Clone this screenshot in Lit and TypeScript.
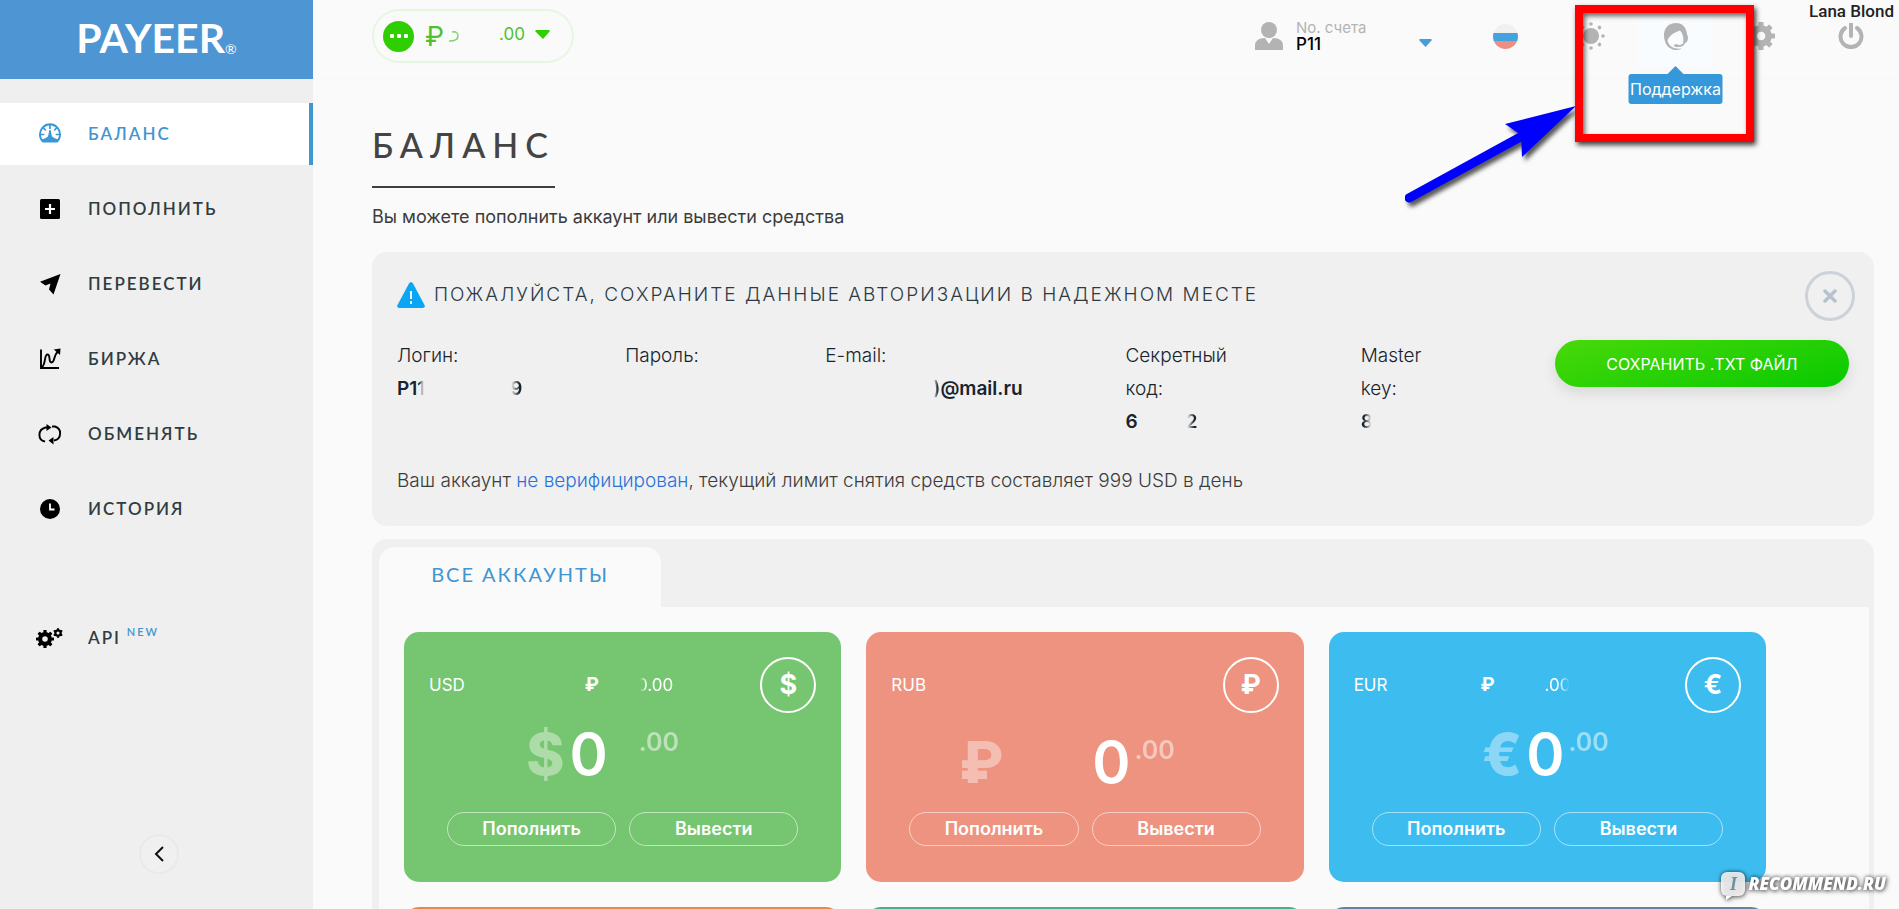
import { LitElement, html, css, svg, nothing } from "lit";
import { customElement, property } from "lit/decorators.js";
import { styleMap } from "lit/directives/style-map.js";

const cog = (cx: number, cy: number, r: number, teeth: number) => {
  const step = 360 / teeth;
  const w = r * 0.36;
  return svg`<g transform="translate(${cx} ${cy})">
    <circle r=${r * 0.54} fill="none" stroke="currentColor" stroke-width=${r * 0.46}></circle>
    ${Array.from({ length: teeth }, (_, i) => svg`<rect x=${-w / 2} y=${-r} width=${w} height=${r * 0.4} rx="0.6"
      fill="currentColor" transform="rotate(${i * step})"></rect>`)}
  </g>`;
};

const icons: Record<string, unknown> = {
  balance: svg`<path fill="currentColor" d="M4.6 20.5a11 11 0 1 1 14.8 0zM12 3.4a9 9 0 0 0-7.6 13.8c1.8-.3 3.6-1 5.6-2.6L11.4 8h1.2l1.4 6.600c2 1.600 3.800 2.300 5.600 2.600A9 9 0 0 0 12 3.400z"></path>
    <path stroke="currentColor" stroke-width="1.700" fill="none" d="M12 3v4M5 5.500l2.800 2.800M19 5.500l-2.800 2.800M2.500 12.500h3.800M21.500 12.500h-3.800"></path>`,
  deposit: svg`<rect x="2" y="2" width="20" height="20" rx="1.500" fill="currentColor"></rect>
    <path d="M12 7v10M7 12h10" stroke="#fff" stroke-width="2.200"></path>`,
  transfer: svg`<path fill="currentColor" d="M22.500 2 15.500 22.500 11 17.500 12.500 11.500 7.500 13.500 2 9.800z"></path>`,
  exchange: svg`<path d="M3 2.500V21h18M4 20C8 17 6 7.500 9.500 7.500S10 15.500 13.500 15.500 15.500 8 20 4.500" fill="none" stroke="currentColor" stroke-width="1.900"></path>
    <path d="M15.800 2.500 22.500 1.500 22 8z" fill="currentColor"></path>`,
  swap: svg`<path d="M9 5.500H7.500C-.5 7.500-.5 18 7 19.500M14 4.500h3c7 2 7 12.500-1 14" fill="none" stroke="currentColor" stroke-width="1.900"></path>
    <path d="M8.500 2 13.500 5.500 8.500 9zM15.500 15 10.500 18.500 15.500 22.500z" fill="currentColor"></path>`,
  history: svg`<circle cx="12" cy="12" r="10" fill="currentColor"></circle>
    <path d="M12 6.500V12.500H16.500" fill="none" stroke="#fff" stroke-width="1.800"></path>`,
};

interface Link { id: string; label: string }
const links: Link[] = [
  { id: "balance", label: "БАЛАНС" },
  { id: "deposit", label: "ПОПОЛНИТЬ" },
  { id: "transfer", label: "ПЕРЕВЕСТИ" },
  { id: "exchange", label: "БИРЖА" },
  { id: "swap", label: "ОБМЕНЯТЬ" },
  { id: "history", label: "ИСТОРИЯ" },
];

interface Account {
  tone: string; code: string; sign: string; low?: boolean;
  lead?: number; gap?: number; total?: string; cut?: string;
  before: number; after: number; tail: number;
}
const accounts: Account[] = [
  { tone: "green", code: "USD", sign: "$", lead: 120, gap: 38, total: "0.00", cut: "cut", before: 5, after: 31, tail: 40 },
  { tone: "coral", code: "RUB", sign: "₽", low: true, before: 89, after: 4, tail: 36 },
  { tone: "blue", code: "EUR", sign: "€", lead: 93, gap: 50, total: ".00", cut: "cut-end", before: 4, after: 4, tail: 4 },
];

const blank = (px: number) => html`<span class="blank" style=${styleMap({ width: `${px}px` })}></span>`;

@customElement("account-card")
class AccountCard extends LitElement {
  @property({ attribute: false }) account!: Account;
  static styles = css`
    :host { display: block; }
    .card { display: flex; flex-direction: column; height: 250px; box-sizing: border-box; padding: 25px; border-radius: 15px; color: #fff; }
    .green { background: #76c570; }
    .coral { background: #ee937f; }
    .blue { background: #3dbdef; }
    .top { display: flex; align-items: center; font-size: 17px; line-height: 20px; }
    .rate { display: flex; align-items: center; }
    .rate b { font-size: 19px; }
    .cut { mask-image: linear-gradient(to right, transparent 8%, #000 26%); }
    .cut-end { mask-image: linear-gradient(to left, transparent 2%, #000 45%); }
    .ring { box-sizing: border-box; width: 56px; height: 56px; border: 2px solid #fff; border-radius: 50%; margin-left: auto; font-size: 27px; font-weight: 700; line-height: 52px; text-align: center; }
    .amount { display: flex; justify-content: center; align-items: flex-start; height: 99px; box-sizing: border-box; font-size: 58px; line-height: 82px; font-weight: 600; }
    .low { padding-top: 8px; }
    .sign { opacity: .4; font-weight: 800; }
    .cents { opacity: .5; font-size: 25px; line-height: 58px; font-weight: 600; }
    .blank { display: inline-block; flex: none; }
    .actions { display: flex; gap: 13px; padding: 0 18px; }
    button { flex: 1; height: 34px; padding: 0; border: 1px solid rgba(255, 255, 255, .55); border-radius: 17px; background: none; color: #fff; font: 600 18px/32px Inter, "Noto Sans", sans-serif; }
  `;
  render() {
    const a = this.account;
    return html`<article class="card ${a.tone}">
      <div class="top"><span>${a.code}</span>
        ${a.total ? html`<span class="rate">${blank(a.lead!)}<b>₽</b>${blank(a.gap!)}<span class=${a.cut!}>${a.total}</span></span>` : nothing}
        <span class="ring">${a.sign}</span></div>
      <div class="amount ${a.low ? "low" : ""}"><span class="sign">${a.sign}</span>${blank(a.before)}<span>0</span>${blank(a.after)}<span class="cents">.00</span>${blank(a.tail)}</div>
      <div class="actions"><button type="button">Пополнить</button><button type="button">Вывести</button></div>
    </article>`;
  }
}

@customElement("app-root")
class AppRoot extends LitElement {
  static styles = css`
    :host { display: block; position: relative; height: 100vh; overflow: hidden; background: #fafafa; color: #3c3c3c; font-family: Inter, "Noto Sans", sans-serif; font-size: 18px; }
    .shell { display: grid; grid-template-columns: 313px minmax(0, 1fr); grid-template-rows: minmax(0, 1fr); height: 100%; }
    a { text-decoration: none; color: inherit; }
    button { border: 0; padding: 0; background: none; color: inherit; font: inherit; }
    svg { display: block; }

    .side { display: flex; flex-direction: column; background: #efefef; }
    .logo { display: flex; justify-content: center; align-items: center; height: 79px; box-sizing: border-box; padding-bottom: 4px; background: #4d95d3; color: #fff; font: 700 41px/74px Lato, sans-serif; }
    .logo small { font-size: 14px; font-weight: 400; padding-top: 22px; }
    .nav { display: flex; flex-direction: column; gap: 13px; padding-top: 24px; font: 600 17px/62px Lato, sans-serif; letter-spacing: 2px; color: #2f3d42; }
    .item { display: flex; align-items: center; gap: 25px; height: 62px; padding-left: 37px; }
    .item svg { width: 26px; height: 24px; color: #000; flex: none; }
    .active { background: #fff; border-right: 4px solid #3f97d0; color: #4195d1; }
    .active svg { color: #3b97d6; }
    .api { margin-top: 54px; }
    .api sup { font-size: 11px; line-height: 12px; color: #4195d1; margin: -12px 0 0 -24px; }
    .fold { align-self: center; display: grid; place-items: center; width: 40px; height: 40px; margin: auto 0 35px 4px; border: 2px solid #e9e9e9; border-radius: 50%; box-sizing: border-box; background: #f0f0f0; }

    .head { display: flex; align-items: center; height: 79px; box-sizing: border-box; padding: 0 0 6px 59px; border-bottom: 1px solid #f6f8f5; }
    .wallet { display: flex; align-items: center; width: 202px; height: 54px; box-sizing: border-box; padding-left: 9px; border: 2px solid #e6f7e0; border-radius: 27px; color: #4dc22c; }
    .dots { display: flex; align-items: center; justify-content: center; gap: 3px; width: 31px; height: 31px; margin-right: 11px; border-radius: 50%; background: #2fce00; }
    .dots i { width: 4px; height: 4px; border-radius: 1px; background: #fff; }
    .wallet b { font-size: 27px; font-weight: 400; margin-right: 3px; }
    .wallet em { font-style: normal; font-size: 17px; margin: 0 10px 5px 40px; }
    .wallet .caret { margin-bottom: 4px; }
    .user { display: flex; align-items: center; gap: 13px; margin-left: auto; width: 208px; color: #b3b3b3; }
    .user dl { margin: 0; width: 110px; font-size: 16px; line-height: 17px; }
    .user dt { font-size: 15px; }
    .user dd { margin: 0; color: #000; font-size: 17px; font-weight: 500; }
    .user .drop { padding-top: 14px; }
    .tool { position: relative; display: grid; place-items: center; width: 85px; height: 73px; color: #b3b3b3; }
    .power { width: 96px; }
    .hover::before { content: ""; position: absolute; left: 5px; right: 5px; top: 17px; bottom: 6px; background: #f8fcff; }
    .hover svg { position: relative; }
    .tip { position: absolute; z-index: 2; top: 74px; left: 50%; translate: -50% 0; padding: 0 2px; border-radius: 3px; background: #3498db; color: #fff; font-size: 16px; line-height: 30px; }
    .tip::before { content: ""; position: absolute; left: 50%; top: -8px; margin-left: -8px; border: 8px solid transparent; border-top: 0; border-bottom-color: #3498db; }
    .flag { width: 25px; height: 25px; border-radius: 50%; background: linear-gradient(#f0f0f0 36%, #45a2e0 36% 68%, #ef8f80 68%); }

    .body { padding: 46px 25px 0 59px; }
    h1 { display: inline-block; margin: 0; padding-bottom: 21px; border-bottom: 2px solid #3f3f3f; color: #444; font: 500 34px/40px Lato, sans-serif; letter-spacing: 7px; }
    .lead { margin: 17px 0 0; line-height: 24px; }
    .panel { border-radius: 15px; background: #f0f0f0; }
    .notice { position: relative; margin-top: 23px; padding: 26px 25px 28px; font-size: 19px; font-weight: 300; }
    h2 { display: flex; align-items: center; gap: 9px; margin: 0; color: #2c3a44; font-size: 19px; font-weight: 300; line-height: 34px; letter-spacing: 2px; }
    .close { position: absolute; right: 19px; top: 19px; display: grid; place-items: center; width: 50px; height: 50px; border: 3px solid #cdd1d8; border-radius: 50%; box-sizing: border-box; }
    .data { display: grid; grid-template-columns: 228fr 200fr 300fr 235fr 194fr 294fr; margin: 27px 0 26px; line-height: 33px; color: #17242e; }
    .data dl, .data dd { margin: 0; }
    .data dd { display: flex; font-weight: 600; }
    .data dt { width: min-content; }
    .data .wide { width: auto; }
    .fade { mask-image: linear-gradient(to right, transparent 10%, #000 70%); }
    .fade-end { mask-image: linear-gradient(to left, transparent 15%, #000 75%); }
    .blank { display: inline-block; flex: none; }
    .save { height: 47px; margin-top: 1px; border-radius: 24px; background: linear-gradient(165deg, #49d90a, #08c900); color: #fff; font-size: 16px; font-weight: 400; line-height: 44px; box-shadow: 0 6px 14px rgba(0, 0, 0, .1); }
    .limit { margin: 0; line-height: 34px; }
    .limit a { color: #2a72d8; }
    .wallets { margin-top: 13px; padding: 8px 5px 0 7px; }
    .tab { display: block; width: 282px; height: 60px; padding-bottom: 6px; border-radius: 15px 15px 0 0; background: #fafafa; color: #4195d1; font: 400 20px/50px Lato, sans-serif; letter-spacing: 2px; }
    .cards { display: grid; grid-template-columns: repeat(3, 1fr); gap: 25px; padding: 25px 103px 60px 25px; background: #fafafa; }
    .next { height: 250px; border-radius: 15px; }
    .orange { background: #e78848; }
    .teal { background: #4cab8e; }
    .slate { background: #66829f; }

    .name { position: absolute; right: 5px; top: 1px; color: #222; font: 500 17px/20px Roboto, sans-serif; }
    .frame { position: absolute; z-index: 4; right: 145px; top: 5px; width: 179px; height: 137px; box-sizing: border-box; border: 8px solid #f00; box-shadow: 2px 3px 5px rgba(0, 0, 0, .75), inset 2px 3px 5px rgba(0, 0, 0, .6); }
    .arrow { position: absolute; right: 314px; top: 95px; filter: drop-shadow(3px 4px 2px rgba(0, 0, 0, .65)); }
    .mark { position: absolute; right: 13px; bottom: 12px; display: flex; align-items: center; gap: 3px; color: #fff; filter: drop-shadow(0 0 2px rgba(0, 0, 0, .6)) drop-shadow(1px 1px 2px rgba(0, 0, 0, .4)); font: italic 800 17px/26px "Open Sans", sans-serif; }
    .bubble { position: relative; width: 24px; height: 24px; border-radius: 6px; background: rgba(255, 255, 255, .85); color: #70909c; font: italic 700 18px/24px "Liberation Serif", serif; text-align: center; }
    .bubble::after { content: ""; position: absolute; left: 5px; top: 24px; border: 4px solid transparent; border-width: 4px 6px 0 0; border-top-color: #fff; }
  `;

  render() {
    return html`
      <div class="shell">
        <aside class="side">
          <a class="logo" href="#">PAYEER<small>®</small></a>
          <nav class="nav">
            ${links.map((l) => html`<a class="item ${l.id === "balance" ? "active" : ""}" href="#${l.id}"><svg viewBox="0 0 24 24">${icons[l.id]}</svg>${l.label}</a>`)}
            <a class="item api" href="#api"><svg viewBox="0 0 26 24" overflow="visible">${cog(8, 13, 9, 8)}${cog(21, 7, 5, 6)}</svg>API <sup>&nbsp;NEW</sup></a>
          </nav>
          <button class="fold" type="button" aria-label="Свернуть"><svg width="10" height="16" viewBox="0 0 10 16"><path d="M9 1 2 8l7 7" fill="none" stroke="#111" stroke-width="2"></path></svg></button>
        </aside>
        <main>
          <header class="head">
            <button class="wallet" type="button">
              <span class="dots"><i></i><i></i><i></i></span><b>₽</b>
              <svg width="12" height="12" viewBox="0 0 12 12" fill="none" stroke="currentColor" stroke-width="1.500"><path d="M5 2q6-1 6 4t-9 5" opacity=".7"></path></svg>
              <em>.00</em>
              <svg class="caret" width="15" height="9"><path d="M1 0h13l1 1-7 8L0 1z" fill="#2fce00"></path></svg>
            </button>
            <div class="user">
              <svg width="28" height="28" viewBox="0 0 28 28" fill="currentColor"><circle cx="14" cy="8" r="8"></circle><path d="M0 28v-4q0-8 10-8l4 6 4-6q10 0 10 8v4z"></path></svg>
              <dl><dt>No. счета</dt><dd>P11</dd></dl>
              <svg class="drop" width="13" height="8" viewBox="0 0 13 8"><path d="M1 0h11l1 1-6.500 7L0 1z" fill="#459dd9"></path></svg>
            </div>
            <button class="tool" type="button" aria-label="Язык"><span class="flag"></span></button>
            <button class="tool" type="button" aria-label="Тема"><svg width="28" height="28" viewBox="-14 -14 28 28" fill="currentColor"><circle r="8"></circle>${[0, 45, 90, 135, 180, 225, 270, 315].map((d) => svg`<circle cy="-12" r="1.800" transform="rotate(${d})"></circle>`)}</svg></button>
            <button class="tool hover" type="button" aria-label="Поддержка">
              <svg width="24" height="27" viewBox="0 0 24 27"><path d="M12 0C4.500 0 0 5 0 12c0 8 4 14 11 15 2.500.3 5-.3 6.500-1.500-8 .8-12.500-2-14-8C5 13 9 10 16 7.500c3 3 4 7.500 3 13-1.500 1.300-3 1.700-4.500 1.700-.3-1-4-1.300-4.500 0-.2 1.600 1.500 1.800 4.500 1.800 3.500 0 5.500-1.500 6.500-4 1.500-.5 3-2 3-5.500 0-1.500-.5-2.500-1-3C22.500 4.500 18.500 0 12 0z" fill="currentColor"></path></svg>
              <span class="tip">Поддержка</span></button>
            <button class="tool" type="button" aria-label="Настройки"><svg width="28" height="28" viewBox="-14 -14 28 28">${cog(0, 0, 14, 8)}</svg></button>
            <button class="tool power" type="button" aria-label="Выход"><svg width="26" height="26" viewBox="0 0 26 26" fill="none" stroke="currentColor" stroke-width="4"><path d="M7 5a10.500 10.500 0 1 0 12 0M13 1v12" stroke-linecap="round"></path></svg></button>
          </header>
          <div class="body">
            <h1>БАЛАНС</h1>
            <p class="lead">Вы можете пополнить аккаунт или вывести средства</p>
            <section class="panel notice">
              <h2><svg width="28" height="26" viewBox="0 0 28 26"><path d="M12 1.500q2-3 4 0l11.500 21.500q1 3-2 3h-23q-3 0-2-3z" fill="#0aa5f5"></path><path d="M14 9v8M14 19v3" stroke="#fff" stroke-width="1.800"></path></svg>ПОЖАЛУЙСТА, СОХРАНИТЕ ДАННЫЕ АВТОРИЗАЦИИ В НАДЕЖНОМ МЕСТЕ</h2>
              <button class="close" type="button" aria-label="Закрыть"><svg width="14" height="14" viewBox="0 0 14 14"><path d="m2 2 10 10M12 2 2 12" stroke="#b8c2cf" stroke-width="3.500" stroke-linecap="round"></path></svg></button>
              <div class="data">
                <dl><dt>Логин:</dt><dd>P1<span class="fade-end">1</span>${blank(85)}<span class="fade">9</span></dd></dl>
                <dl><dt>Пароль:</dt><dd></dd></dl>
                <dl><dt class="wide">E-mail:</dt><dd>${blank(108)}<span class="fade">)</span>@mail.ru</dd></dl>
                <dl><dt>Секретный код:</dt><dd>6${blank(48)}<span class="fade">2</span></dd></dl>
                <dl><dt>Master key:</dt><dd><span class="fade-end">8</span></dd></dl>
                <button class="save" type="button">СОХРАНИТЬ .TXT ФАЙЛ</button>
              </div>
              <p class="limit">Ваш аккаунт <a href="#verify">не верифицирован</a>, текущий лимит снятия средств составляет 999 USD в день</p>
            </section>
            <section class="panel wallets">
              <button class="tab" type="button">ВСЕ АККАУНТЫ</button>
              <div class="cards">
                ${accounts.map((a) => html`<account-card .account=${a}></account-card>`)}
                <div class="next orange"></div><div class="next teal"></div><div class="next slate"></div>
              </div>
            </section>
          </div>
        </main>
      </div>
      <span class="name">Lana Blond</span>
      <svg class="arrow" width="180" height="110" viewBox="1405 95 180 110"><path d="M1409 198 1524 135" stroke="#00f" stroke-width="9" stroke-linecap="round"></path><path d="M1576 106 1505 124 1521 135 1522 157z" fill="#00f"></path></svg>
      <div class="frame"></div>
      <div class="mark"><span class="bubble">I</span>RECOMMEND.RU</div>
    `;
  }
}
